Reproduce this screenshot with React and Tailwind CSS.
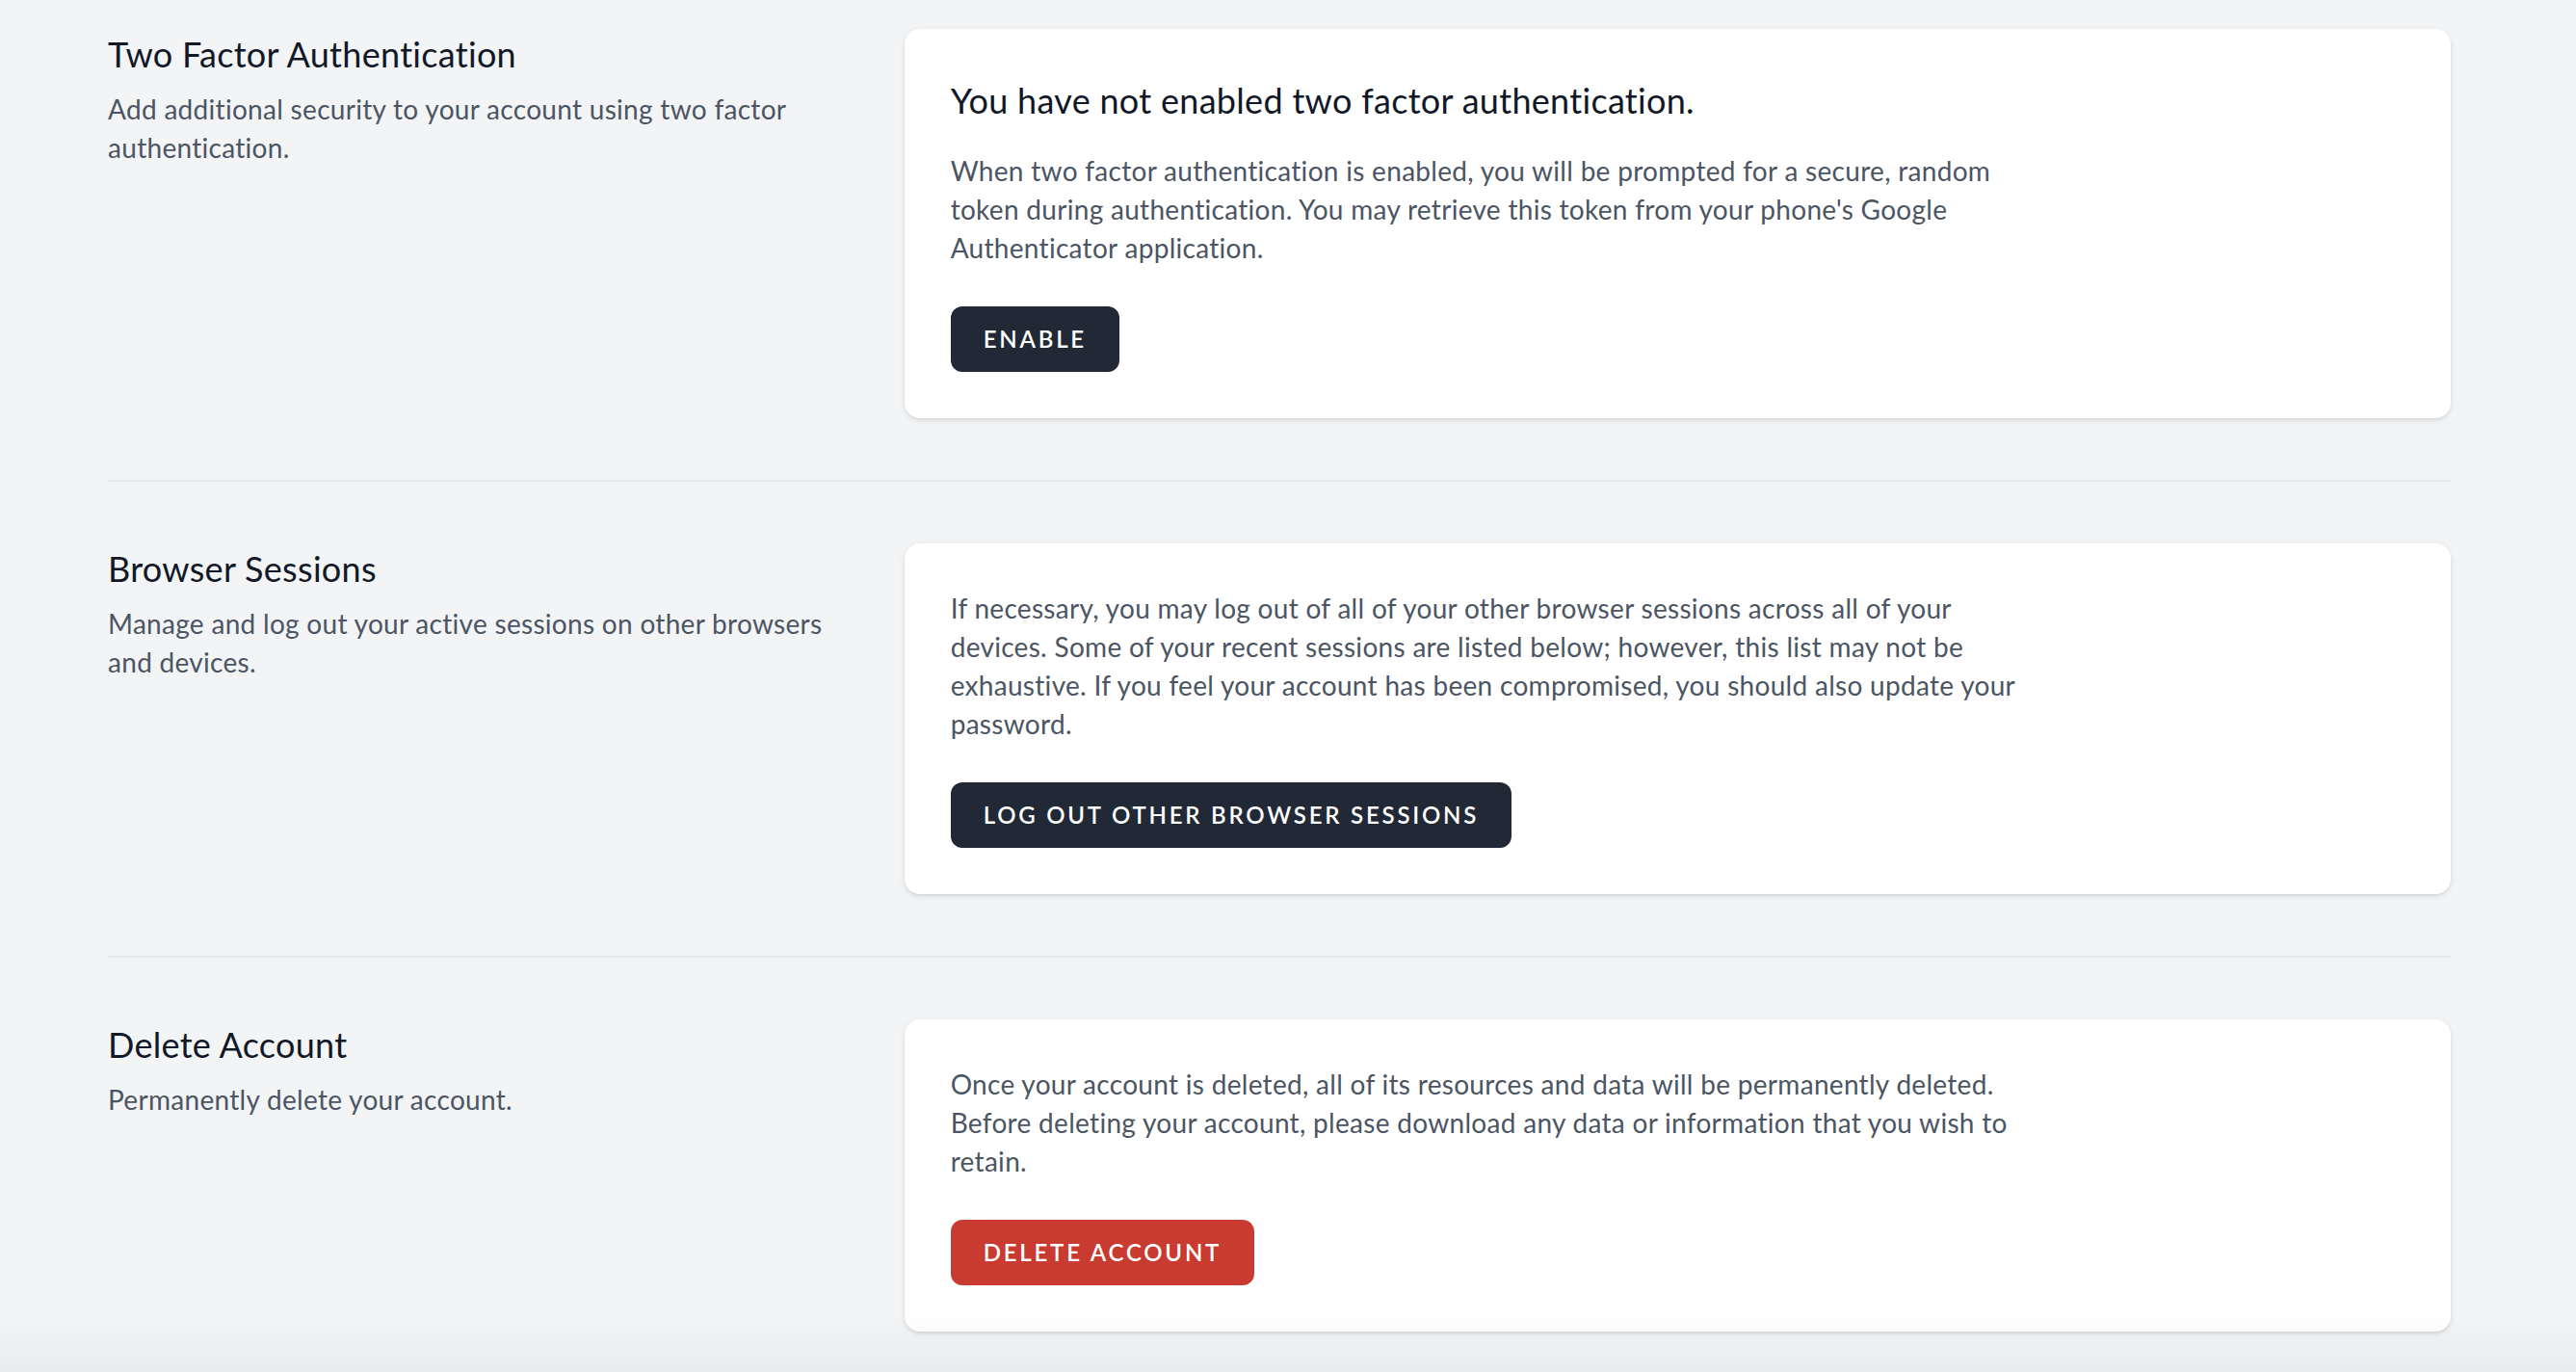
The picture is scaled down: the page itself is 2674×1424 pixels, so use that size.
import React from "react";

const font = { fontFamily: "Lato, 'Noto Sans', sans-serif" };

function Section({ title, desc, children }) {
  return (
    <div className="grid grid-cols-3 gap-x-[48px]">
      <div className="col-span-1 flex flex-col items-start">
        <h3 className="-mt-[2px] mb-[2px] text-[36px] leading-[56px] font-normal tracking-[0.3px] text-[#111827]">{title}</h3>
        <p className="mt-[7px] text-[28px] leading-[40px] tracking-[0.3px] text-[#4b5563]">{desc}</p>
      </div>
      <div className="col-span-2 flex flex-col items-start bg-white rounded-[16px] p-[48px] shadow-[0_2px_6px_0_rgba(0,0,0,0.1),0_2px_4px_-2px_rgba(0,0,0,0.1)]">
        {children}
      </div>
    </div>
  );
}

function Btn({ children, red }) {
  return (
    <button
      className={
        "inline-flex items-center px-[32px] py-[16px] border-2 border-transparent rounded-[12px] font-semibold text-[24px] leading-[32px] text-white uppercase tracking-[0.116em] " +
        (red ? "bg-[#c93a31]" : "bg-[#222936]")
      }
    >
      {children}
    </button>
  );
}

function Border() {
  return (
    <div className="py-[64px]">
      <div className="border-t-2 border-[#e5e7eb]" />
    </div>
  );
}

function Para({ children }) {
  return (
    <p className="-mt-[1px] mb-[1px] max-w-[1200px] text-[28px] leading-[40px] tracking-[0.3px] text-[#4b5563]">
      {children}
    </p>
  );
}

export default function App() {
  return (
    <div className="min-h-screen bg-[#f3f4f6] pt-[30px] pb-[60px]" style={font}>
      <div className="ml-[112px] w-[2432px]">
        <Section
          title="Two Factor Authentication"
          desc={<>Add additional security to your account using two factor<br />authentication.</>}
        >
          <h3 className="-mt-[2px] mb-[26px] text-[36px] leading-[56px] font-normal tracking-[0.3px] text-[#111827]">
            You have not enabled two factor authentication.
          </h3>
          <Para>
            When two factor authentication is enabled, you will be prompted for a secure, random<br />
            token during authentication. You may retrieve this token from your phone's Google<br />
            Authenticator application.
          </Para>
          <div className="mt-[40px]">
            <Btn>Enable</Btn>
          </div>
        </Section>

        <Border />

        <Section
          title="Browser Sessions"
          desc={<>Manage and log out your active sessions on other browsers<br />and devices.</>}
        >
          <Para>
            If necessary, you may log out of all of your other browser sessions across all of your<br />
            devices. Some of your recent sessions are listed below; however, this list may not be<br />
            exhaustive. If you feel your account has been compromised, you should also update your<br />
            password.
          </Para>
          <div className="mt-[40px] flex items-center">
            <Btn>Log Out Other Browser Sessions</Btn>
          </div>
        </Section>

        <Border />

        <Section title="Delete Account" desc="Permanently delete your account.">
          <Para>
            Once your account is deleted, all of its resources and data will be permanently deleted.<br />
            Before deleting your account, please download any data or information that you wish to<br />
            retain.
          </Para>
          <div className="mt-[40px]">
            <Btn red>Delete Account</Btn>
          </div>
        </Section>
      </div>
      <div className="fixed left-0 right-0 bottom-0 h-[60px] bg-linear-to-b from-transparent to-[rgba(0,0,0,0.035)] pointer-events-none" />
    </div>
  );
}
